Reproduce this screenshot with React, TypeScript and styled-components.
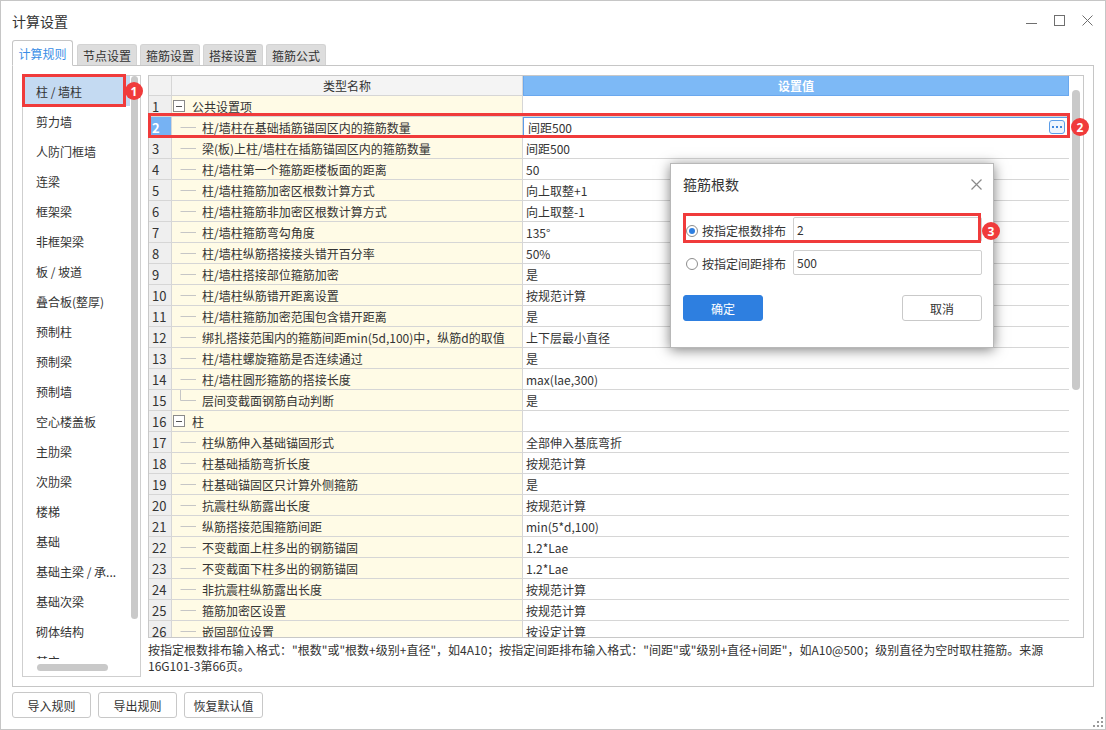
import React from 'react';
import styled, { createGlobalStyle } from 'styled-components';

const FONT = `"Noto Sans CJK SC", "Microsoft YaHei", "Noto Sans", sans-serif`;

const COLORS = {
  text: '#333333',
  border: '#c6c6c6',
  grid: '#d6d6d6',
  yellow: '#fffbe6',
  blue: '#7db9f6',
  blueDark: '#5b9de8',
  primary: '#2e7fe0',
  red: '#f03b3b',
  thumb: '#c9c9c9',
};

const GlobalStyle = createGlobalStyle`
  * { box-sizing: border-box; }
  html, body { margin: 0; padding: 0; background: #ffffff; }
  body { font-family: ${FONT}; font-size: 12px; color: ${COLORS.text}; }
`;

const Window = styled.div`
  position: relative;
  width: 1106px;
  height: 730px;
  border: 1px solid ${COLORS.border};
  background: #ffffff;
  display: flex;
  flex-direction: column;
  overflow: hidden;
`;

const TitleBar = styled.div`
  height: 39px;
  flex-shrink: 0;
  display: flex;
  align-items: center;
  justify-content: space-between;
  padding: 0 12px 0 11px;
`;

const Title = styled.div`
  font-size: 14px;
`;

const WinControls = styled.div`
  display: flex;
  gap: 17px;
  align-items: center;
  margin-top: -1px;
`;

const TabBar = styled.div`
  height: 25px;
  flex-shrink: 0;
  display: flex;
  align-items: flex-end;
  gap: 3px;
  padding-left: 11px;
`;

const Tab = styled.div<{ $active?: boolean }>`
  display: flex;
  align-items: center;
  justify-content: center;
  position: relative;
  z-index: 1;
  width: ${(p) => (p.$active ? '61px' : '60px')};
  height: ${(p) => (p.$active ? '26px' : '21px')};
  margin-bottom: ${(p) => (p.$active ? '-1px' : '0')};
  margin-right: ${(p) => (p.$active ? '1px' : '0')};
  border: 1px solid ${(p) => (p.$active ? COLORS.border : '#d3d3d3')};
  border-bottom: ${(p) => (p.$active ? '1px solid #ffffff' : 'none')};
  border-radius: 3px 3px 0 0;
  background: ${(p) => (p.$active ? '#ffffff' : '#dddddd')};
  color: ${(p) => (p.$active ? '#3a8ee6' : COLORS.text)};
  padding-top: ${(p) => (p.$active ? '1px' : '0')};
`;

const Panel = styled.div`
  height: 622px;
  flex-shrink: 0;
  margin: 0 11px;
  border: 1px solid ${COLORS.border};
  padding: 8px 9px 9px 9px;
  display: flex;
  gap: 7px;
`;

const Sidebar = styled.div`
  width: 119px;
  margin-top: 1px;
  border: 1px solid #cfcfcf;
  display: flex;
  flex-direction: column;
`;

const SideViewport = styled.div`
  flex: 1;
  display: flex;
  overflow: hidden;
`;

const SideItems = styled.div`
  flex: 1;
  display: flex;
  flex-direction: column;
`;

const SideItem = styled.div<{ $selected?: boolean }>`
  height: 30px;
  flex-shrink: 0;
  display: flex;
  align-items: center;
  padding-left: 13px;
  white-space: nowrap;
  background: ${(p) => (p.$selected ? '#c4daf2' : 'transparent')};
`;

const SideTrack = styled.div`
  width: 10px;
  flex-shrink: 0;
`;

const SideThumb = styled.div`
  width: 7px;
  height: 543px;
  margin-left: 1px;
  border-radius: 4px;
  background: ${COLORS.thumb};
`;

const HScroll = styled.div`
  height: 17px;
  flex-shrink: 0;
  padding: 5px 0 0 14px;
  background: #ffffff;
`;

const HThumb = styled.div`
  width: 71px;
  height: 7px;
  border-radius: 4px;
  background: ${COLORS.thumb};
`;

const RightCol = styled.div`
  flex: 1;
  display: flex;
  flex-direction: column;
  margin-top: 1px;
`;

const Table = styled.div`
  height: 563px;
  flex-shrink: 0;
  border: 1px solid #c8c8c8;
  display: flex;
  overflow: hidden;
`;

const Grid = styled.div`
  flex: 1;
  display: flex;
  flex-direction: column;
  overflow: hidden;
`;

const HeaderRow = styled.div`
  height: 20px;
  flex-shrink: 0;
  display: flex;
  border-bottom: 1px solid ${COLORS.grid};
`;

const BodyRow = styled.div`
  height: 21px;
  flex-shrink: 0;
  display: flex;
  border-bottom: 1px solid ${COLORS.grid};
`;

const NumCell = styled.div<{ $selected?: boolean; $head?: boolean }>`
  width: 23px;
  flex-shrink: 0;
  display: flex;
  align-items: center;
  padding-left: 3px;
  font-size: 13px;
  border-right: 1px solid ${COLORS.grid};
  background: ${(p) => (p.$selected ? '#76b2f3' : p.$head ? '#f2f2f2' : '#efefef')};
  color: ${(p) => (p.$selected ? '#ffffff' : COLORS.text)};
  font-weight: ${(p) => (p.$selected ? 'bold' : 'normal')};
`;

const NameHead = styled.div`
  width: 351px;
  flex-shrink: 0;
  display: flex;
  align-items: center;
  justify-content: center;
  background: #f4f4f4;
  border-right: 1px solid ${COLORS.grid};
`;

const ValueHead = styled.div`
  flex: 1;
  display: flex;
  align-items: center;
  justify-content: center;
  background: ${COLORS.blue};
  border: 1px solid #6aa8ee;
  border-top: none;
  margin-bottom: -1px;
  color: #ffffff;
  font-weight: bold;
`;

const NameCell = styled.div`
  width: 351px;
  flex-shrink: 0;
  display: flex;
  align-items: center;
  background: ${COLORS.yellow};
  border-right: 1px solid ${COLORS.grid};
  white-space: nowrap;
  overflow: hidden;
`;

const ValueCell = styled.div<{ $editing?: boolean }>`
  flex: 1;
  display: flex;
  align-items: center;
  padding-left: ${(p) => (p.$editing ? '5px' : '3px')};
  padding-right: 4px;
  background: #ffffff;
  white-space: nowrap;
  box-shadow: ${(p) => (p.$editing ? `inset 0 0 0 1px ${COLORS.blueDark}` : 'none')};
`;

const Toggle = styled.div`
  width: 12px;
  height: 12px;
  margin-left: 1px;
  margin-right: 7px;
  border: 1px solid #8a8a8a;
  background: #ffffff;
  display: flex;
  align-items: center;
  justify-content: center;
  flex-shrink: 0;

  &::after {
    content: '';
    width: 6px;
    height: 1px;
    background: #555555;
  }
`;

const TreeLines = styled.svg`
  flex-shrink: 0;
  display: block;
`;

const MoreButton = styled.div`
  margin-left: auto;
  width: 16px;
  height: 14px;
  border: 1px solid ${COLORS.blueDark};
  border-radius: 3px;
  background: #eef5fe;
  display: flex;
  align-items: center;
  justify-content: center;
  gap: 2px;
`;

const Dot = styled.span`
  width: 2px;
  height: 2px;
  background: #3d86de;
`;

const TableTrack = styled.div`
  width: 14px;
  flex-shrink: 0;
  padding: 14px 0 0 3px;
`;

const TableThumb = styled.div`
  width: 8px;
  height: 300px;
  border-radius: 4px;
  background: ${COLORS.thumb};
`;

const HelpText = styled.div`
  padding-top: 4px;
  line-height: 16px;
  white-space: nowrap;
`;

const ButtonBar = styled.div`
  display: flex;
  gap: 7px;
  padding: 5px 0 0 11px;
`;

const FooterButton = styled.div`
  width: 79px;
  height: 26px;
  border: 1px solid #c8c8c8;
  border-radius: 3px;
  background: #ffffff;
  display: flex;
  align-items: center;
  justify-content: center;
`;

const Grip = styled.svg`
  position: absolute;
  right: 2px;
  bottom: 2px;
`;

const Dialog = styled.div`
  position: absolute;
  left: 669px;
  top: 162px;
  width: 324px;
  height: 185px;
  background: #ffffff;
  border: 1px solid #b8b8b8;
  box-shadow: 0 2px 12px rgba(0, 0, 0, 0.5);
  display: flex;
  flex-direction: column;
  z-index: 5;
`;

const DialogHeader = styled.div`
  height: 40px;
  flex-shrink: 0;
  display: flex;
  align-items: center;
  justify-content: space-between;
  padding: 0 11px 0 12px;
`;

const DialogTitle = styled.div`
  font-size: 14px;
`;

const DialogBody = styled.div`
  display: flex;
  flex-direction: column;
  gap: 8px;
  padding: 13px 11px 0 12px;
`;

const OptionRow = styled.div`
  height: 25px;
  display: flex;
  align-items: center;
`;

const Radio = styled.span<{ $checked?: boolean }>`
  width: 12px;
  height: 12px;
  margin: 2px 4px 0 3px;
  border-radius: 50%;
  border: 1px solid #8d8d8d;
  background: #ffffff;
  display: flex;
  align-items: center;
  justify-content: center;
  flex-shrink: 0;

  &::after {
    content: '';
    width: 6px;
    height: 6px;
    border-radius: 50%;
    background: ${(p) => (p.$checked ? COLORS.primary : 'transparent')};
  }
`;

const OptionLabel = styled.span`
  width: 91px;
  font-size: 12px;
  padding-top: 2px;
  white-space: nowrap;
`;

const OptionInput = styled.div`
  flex: 1;
  height: 25px;
  border: 1px solid #cfcfcf;
  border-radius: 2px;
  display: flex;
  align-items: center;
  padding-left: 3px;
`;

const DialogFooter = styled.div`
  display: flex;
  justify-content: space-between;
  padding: 20px 11px 0 12px;
`;

const DialogButton = styled.div<{ $primary?: boolean }>`
  width: 80px;
  height: 26px;
  border-radius: 3px;
  display: flex;
  align-items: center;
  justify-content: center;
  background: ${(p) => (p.$primary ? COLORS.primary : '#ffffff')};
  color: ${(p) => (p.$primary ? '#ffffff' : COLORS.text)};
  border: 1px solid ${(p) => (p.$primary ? COLORS.primary : '#c9c9c9')};
`;

const Highlight = styled.div<{ $x: number; $y: number; $w: number; $h: number }>`
  position: absolute;
  left: ${(p) => p.$x}px;
  top: ${(p) => p.$y}px;
  width: ${(p) => p.$w}px;
  height: ${(p) => p.$h}px;
  border: 3px solid ${COLORS.red};
  pointer-events: none;
  z-index: 6;
`;

const Badge = styled.div<{ $x: number; $y: number }>`
  position: absolute;
  left: ${(p) => p.$x}px;
  top: ${(p) => p.$y}px;
  width: 18px;
  height: 18px;
  border-radius: 50%;
  background: ${COLORS.red};
  color: #ffffff;
  font-family: "Noto Sans", "Liberation Sans", sans-serif;
  font-weight: bold;
  font-size: 12px;
  display: flex;
  align-items: center;
  justify-content: center;
  z-index: 7;
`;

const TABS = ['计算规则', '节点设置', '箍筋设置', '搭接设置', '箍筋公式'];

const SIDE_ITEMS = [
  '柱 / 墙柱',
  '剪力墙',
  '人防门框墙',
  '连梁',
  '框架梁',
  '非框架梁',
  '板 / 坡道',
  '叠合板(整厚)',
  '预制柱',
  '预制梁',
  '预制墙',
  '空心楼盖板',
  '主肋梁',
  '次肋梁',
  '楼梯',
  '基础',
  '基础主梁 / 承...',
  '基础次梁',
  '砌体结构',
  '其它',
];

type Row = { name: string; value?: string; group?: boolean; last?: boolean };

const ROWS: Row[] = [
  { name: '公共设置项', group: true },
  { name: '柱/墙柱在基础插筋锚固区内的箍筋数量', value: '间距500' },
  { name: '梁(板)上柱/墙柱在插筋锚固区内的箍筋数量', value: '间距500' },
  { name: '柱/墙柱第一个箍筋距楼板面的距离', value: '50' },
  { name: '柱/墙柱箍筋加密区根数计算方式', value: '向上取整+1' },
  { name: '柱/墙柱箍筋非加密区根数计算方式', value: '向上取整-1' },
  { name: '柱/墙柱箍筋弯勾角度', value: '135°' },
  { name: '柱/墙柱纵筋搭接接头错开百分率', value: '50%' },
  { name: '柱/墙柱搭接部位箍筋加密', value: '是' },
  { name: '柱/墙柱纵筋错开距离设置', value: '按规范计算' },
  { name: '柱/墙柱箍筋加密范围包含错开距离', value: '是' },
  { name: '绑扎搭接范围内的箍筋间距min(5d,100)中，纵筋d的取值', value: '上下层最小直径' },
  { name: '柱/墙柱螺旋箍筋是否连续通过', value: '是' },
  { name: '柱/墙柱圆形箍筋的搭接长度', value: 'max(lae,300)' },
  { name: '层间变截面钢筋自动判断', value: '是', last: true },
  { name: '柱', group: true },
  { name: '柱纵筋伸入基础锚固形式', value: '全部伸入基底弯折' },
  { name: '柱基础插筋弯折长度', value: '按规范计算' },
  { name: '柱基础锚固区只计算外侧箍筋', value: '是' },
  { name: '抗震柱纵筋露出长度', value: '按规范计算' },
  { name: '纵筋搭接范围箍筋间距', value: 'min(5*d,100)' },
  { name: '不变截面上柱多出的钢筋锚固', value: '1.2*Lae' },
  { name: '不变截面下柱多出的钢筋锚固', value: '1.2*Lae' },
  { name: '非抗震柱纵筋露出长度', value: '按规范计算' },
  { name: '箍筋加密区设置', value: '按规范计算' },
  { name: '嵌固部位设置', value: '按设定计算' },
];

const EDIT_ROW = 2;

const Branch = ({ last }: { last?: boolean }) => (
  <TreeLines width="30" height="20" viewBox="0 0 30 20">
    <line x1="8.5" y1="10.5" x2="24" y2="10.5" stroke="#c6c6c6" strokeWidth="1" />
    {last && <line x1="8.5" y1="0" x2="8.5" y2="10.5" stroke="#c6c6c6" strokeWidth="1" />}
  </TreeLines>
);

const WindowIcons = () => (
  <WinControls>
    <svg width="11" height="11" viewBox="0 0 11 11">
      <line x1="0" y1="8.5" x2="11" y2="8.5" stroke="#6f6f6f" strokeWidth="1" />
    </svg>
    <svg width="11" height="11" viewBox="0 0 11 11">
      <rect x="0.5" y="0.5" width="10" height="10" fill="none" stroke="#6f6f6f" strokeWidth="1" />
    </svg>
    <svg width="11" height="11" viewBox="0 0 11 11">
      <path d="M0.5 0.5 L10.5 10.5 M10.5 0.5 L0.5 10.5" stroke="#6f6f6f" strokeWidth="1" />
    </svg>
  </WinControls>
);

const RulesTable = () => (
  <Table>
    <Grid>
      <HeaderRow>
        <NumCell $head />
        <NameHead>类型名称</NameHead>
        <ValueHead>设置值</ValueHead>
      </HeaderRow>
      {ROWS.map((row, i) => {
        const num = i + 1;
        const editing = num === EDIT_ROW;
        return (
          <BodyRow key={num}>
            <NumCell $selected={editing}>{num}</NumCell>
            <NameCell>
              {row.group ? <Toggle /> : <Branch last={row.last} />}
              {row.name}
            </NameCell>
            <ValueCell $editing={editing}>
              {row.value}
              {editing && (
                <MoreButton>
                  <Dot />
                  <Dot />
                  <Dot />
                </MoreButton>
              )}
            </ValueCell>
          </BodyRow>
        );
      })}
    </Grid>
    <TableTrack>
      <TableThumb />
    </TableTrack>
  </Table>
);

const CountDialog = () => (
  <Dialog>
    <DialogHeader>
      <DialogTitle>箍筋根数</DialogTitle>
      <svg width="11" height="11" viewBox="0 0 11 11">
        <path d="M0.5 0.5 L10.5 10.5 M10.5 0.5 L0.5 10.5" stroke="#8a8a8a" strokeWidth="1.2" />
      </svg>
    </DialogHeader>
    <DialogBody>
      <OptionRow>
        <Radio $checked />
        <OptionLabel>按指定根数排布</OptionLabel>
        <OptionInput>2</OptionInput>
      </OptionRow>
      <OptionRow>
        <Radio />
        <OptionLabel>按指定间距排布</OptionLabel>
        <OptionInput>500</OptionInput>
      </OptionRow>
    </DialogBody>
    <DialogFooter>
      <DialogButton $primary>确定</DialogButton>
      <DialogButton>取消</DialogButton>
    </DialogFooter>
  </Dialog>
);

export default function App() {
  return (
    <>
      <GlobalStyle />
      <Window>
        <TitleBar>
          <Title>计算设置</Title>
          <WindowIcons />
        </TitleBar>

        <TabBar>
          {TABS.map((t, i) => (
            <Tab key={t} $active={i === 0}>
              {t}
            </Tab>
          ))}
        </TabBar>

        <Panel>
          <Sidebar>
            <SideViewport>
              <SideItems>
                {SIDE_ITEMS.map((item, i) => (
                  <SideItem key={item} $selected={i === 0}>
                    {item}
                  </SideItem>
                ))}
              </SideItems>
              <SideTrack>
                <SideThumb />
              </SideTrack>
            </SideViewport>
            <HScroll>
              <HThumb />
            </HScroll>
          </Sidebar>

          <RightCol>
            <RulesTable />
            <HelpText>
              按指定根数排布输入格式："根数"或"根数+级别+直径"，如4A10；按指定间距排布输入格式："间距"或"级别+直径+间距"，如A10@500；级别直径为空时取柱箍筋。来源
              <br />
              16G101-3第66页。
            </HelpText>
          </RightCol>
        </Panel>

        <ButtonBar>
          <FooterButton>导入规则</FooterButton>
          <FooterButton>导出规则</FooterButton>
          <FooterButton>恢复默认值</FooterButton>
        </ButtonBar>

        <CountDialog />

        <Highlight $x={21} $y={73} $w={104} $h={33} />
        <Badge $x={124} $y={81}>1</Badge>
        <Highlight $x={147} $y={112} $w={922} $h={25} />
        <Badge $x={1070} $y={117}>2</Badge>
        <Highlight $x={682} $y={212} $w={298} $h={30} />
        <Badge $x={981} $y={221}>3</Badge>

        <Grip width="10" height="10" viewBox="0 0 10 10">
          <rect x="8" y="0" width="2" height="2" fill="#9a9a9a" />
          <rect x="4" y="4" width="2" height="2" fill="#9a9a9a" />
          <rect x="8" y="4" width="2" height="2" fill="#9a9a9a" />
          <rect x="0" y="8" width="2" height="2" fill="#9a9a9a" />
          <rect x="4" y="8" width="2" height="2" fill="#9a9a9a" />
          <rect x="8" y="8" width="2" height="2" fill="#9a9a9a" />
        </Grip>
      </Window>
    </>
  );
}
